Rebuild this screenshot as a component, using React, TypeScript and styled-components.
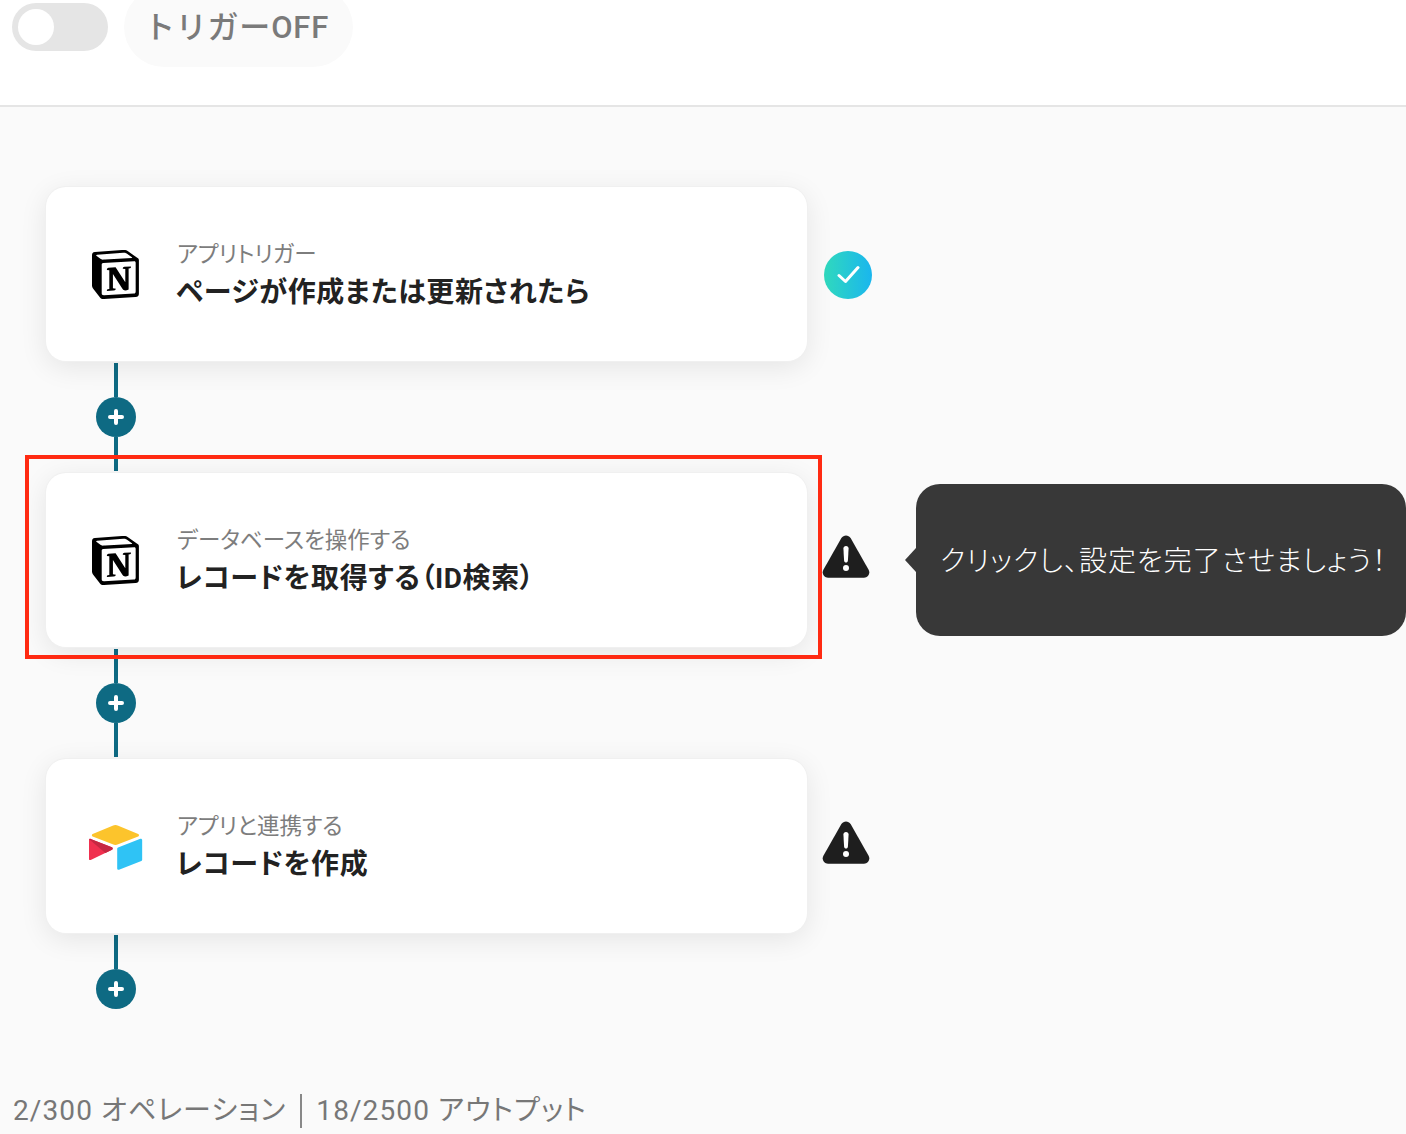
import styled, { createGlobalStyle } from "styled-components";

const GlobalStyle = createGlobalStyle`
  html, body {
    margin: 0;
    padding: 0;
    overflow: hidden;
    background: #fafafa;
  }

  * {
    box-sizing: border-box;
  }

  body {
    font-family: Roboto, "Noto Sans CJK JP", sans-serif;
  }
`;

const NotionLogo = () => (
  <svg width="49" height="50" viewBox="0 0 100 102">
    <path
      fill="#fff"
      d="M6.017 4.313l55.333 -4.087c6.797 -0.583 8.543 -0.19 12.817 2.917l17.663 12.443c2.913 2.14 3.883 2.723 3.883 5.053v68.243c0 4.277 -1.553 6.807 -6.99 7.193L24.467 99.967c-4.08 0.193 -6.023 -0.39 -8.16 -3.113L3.3 79.94c-2.333 -3.113 -3.3 -5.443 -3.3 -8.167V11.113c0 -3.497 1.553 -6.413 6.017 -6.8z"
    />
    <path
      fill="#000"
      fillRule="evenodd"
      d="M61.35 0.227l-55.333 4.087C1.553 4.7 0 7.617 0 11.113v60.66c0 2.723 0.967 5.053 3.3 8.167l13.007 16.913c2.137 2.723 4.08 3.307 8.16 3.113l64.257 -3.89c5.433 -0.387 6.99 -2.917 6.99 -7.193V20.64c0 -2.21 -0.873 -2.847 -3.443 -4.733L74.167 3.143c-4.273 -3.107 -6.02 -3.5 -12.817 -2.917zM25.92 19.523c-5.247 0.353 -6.437 0.433 -9.417 -1.99L8.927 11.507c-0.77 -0.78 -0.383 -1.753 1.557 -1.947l53.193 -3.887c4.467 -0.39 6.793 1.167 8.54 2.527l9.123 6.61c0.39 0.197 1.36 1.36 0.193 1.36l-54.933 3.307 -0.68 0.047zM19.803 88.3V30.367c0 -2.53 0.777 -3.697 3.103 -3.893L86 22.78c2.14 -0.193 3.107 1.167 3.107 3.693v57.547c0 2.53 -0.39 4.67 -3.883 4.863l-60.377 3.5c-3.493 0.193 -5.043 -0.97 -5.043 -3.983zm59.6 -54.827c0.387 1.75 0 3.5 -1.75 3.7l-2.91 0.577v42.773c-2.527 1.36 -4.853 2.137 -6.797 2.137 -3.107 0 -3.883 -0.973 -6.21 -3.887l-19.03 -29.94v28.967l6.02 1.363s0 3.5 -4.857 3.5l-13.39 0.777c-0.39 -0.78 0 -2.723 1.357 -3.11l3.497 -0.97v-38.3L30.48 40.667c-0.39 -1.75 0.58 -4.277 3.3 -4.473l14.367 -0.967 19.8 30.327v-26.83l-5.047 -0.58c-0.39 -2.143 1.163 -3.7 3.103 -3.89l13.4 -0.78z"
    />
  </svg>
);

const AirtableLogo = () => (
  <svg width="55" height="47" viewBox="12 8 182 153">
    <path
      fill="#fcc42c"
      d="M90.039 12.368 24.079 39.66c-3.667 1.519-3.63 6.729.062 8.192l66.235 26.266a24.58 24.58 0 0 0 18.12 0l66.236-26.266c3.69-1.463 3.729-6.673.06-8.191l-65.958-27.293a24.58 24.58 0 0 0-18.795 0"
    />
    <path
      fill="#2fc3f5"
      d="M105.312 88.46v65.617c0 3.12 3.147 5.258 6.048 4.108l73.806-28.648a4.42 4.42 0 0 0 2.79-4.108V59.813c0-3.121-3.147-5.258-6.048-4.108l-73.806 28.648a4.42 4.42 0 0 0-2.79 4.108"
    />
    <path
      fill="#f0304f"
      d="m88.078 91.846-21.904 10.576-2.224 1.075-46.238 22.155c-2.93 1.414-6.672-.722-6.672-3.978V60.088c0-1.178.604-2.195 1.414-2.96a5 5 0 0 1 1.12-.84c1.104-.663 2.68-.84 4.02-.31L87.71 83.76c3.564 1.414 3.844 6.408.368 8.087"
    />
    <path
      fill="#c62842"
      d="m88.078 91.846-21.904 10.576-53.72-45.295a5 5 0 0 1 1.12-.839c1.104-.663 2.68-.84 4.02-.31L87.71 83.76c3.564 1.414 3.844 6.408.368 8.087"
    />
  </svg>
);

const CheckIcon = () => (
  <svg width="24" height="24" viewBox="0 0 24 24" fill="none">
    <path
      d="M3 12.5 9.5 18.5 22 4.5"
      stroke="#fff"
      strokeWidth="3"
      strokeLinecap="round"
      strokeLinejoin="round"
    />
  </svg>
);

const WarningIcon = () => (
  <svg width="48" height="43" viewBox="0 0 48 43">
    <path
      fill="#1e1e1e"
      d="M19.4 3.1c2.1-3.6 7.1-3.6 9.2 0l18 31.6c2 3.6-.5 8-4.6 8H6c-4.1 0-6.6-4.4-4.6-8z"
    />
    <path
      fill="#fff"
      d="M21.4 13.5c0-1.5 1.1-2.6 2.6-2.6s2.6 1.1 2.6 2.6l-.7 12.3c-.1 1-.9 1.8-1.9 1.8s-1.8-.8-1.9-1.8z"
    />
    <circle cx="24" cy="33" r="3" fill="#fff" />
  </svg>
);

const PlusIcon = () => (
  <svg width="16" height="16" viewBox="0 0 16 16" fill="none">
    <path
      d="M8 2v12M2 8h12"
      stroke="#fff"
      strokeWidth="4"
      strokeLinecap="round"
    />
  </svg>
);

interface StepProps {
  logo: React.ReactNode;
  label: string;
  title: string;
  highlighted?: boolean;
  status: React.ReactNode;
  children?: React.ReactNode;
}

const Step = ({ logo, label, title, highlighted, status, children }: StepProps) => (
  <StepRow>
    <Card>
      <LogoSlot>{logo}</LogoSlot>
      <CardText>
        <CardLabel>{label}</CardLabel>
        <CardTitle>{title}</CardTitle>
      </CardText>
      {highlighted && <Highlight />}
    </Card>
    {status}
    {children}
  </StepRow>
);

const Connector = ({ last }: { last?: boolean }) => (
  <ConnectorColumn>
    <ConnectorLine />
    <AddButton>
      <PlusIcon />
    </AddButton>
    {!last && <ConnectorLine />}
  </ConnectorColumn>
);

const App = () => (
  <>
    <GlobalStyle />
    <Page>
      <Header>
        <Toggle>
          <ToggleKnob />
        </Toggle>
        <TriggerPill>トリガーOFF</TriggerPill>
      </Header>
      <Flow>
        <Step
          logo={<NotionLogo />}
          label="アプリトリガー"
          title="ページが作成または更新されたら"
          status={
            <DoneBadge>
              <CheckIcon />
            </DoneBadge>
          }
        />
        <Connector />
        <Step
          logo={<NotionLogo />}
          label="データベースを操作する"
          title="レコードを取得する（ID検索）"
          highlighted
          status={
            <WarningSlot>
              <WarningIcon />
            </WarningSlot>
          }
        >
          <Tooltip>クリックし、設定を完了させましょう！</Tooltip>
        </Step>
        <Connector />
        <Step
          logo={<AirtableLogo />}
          label="アプリと連携する"
          title="レコードを作成"
          status={
            <WarningSlot>
              <WarningIcon />
            </WarningSlot>
          }
        />
        <Connector last />
      </Flow>
      <Usage>
        2/300 オペレーション
        <UsageDivider />
        18/2500 アウトプット
      </Usage>
    </Page>
  </>
);

const Page = styled.div`
  display: flex;
  flex-direction: column;

  width: 1406px;
  height: 1134px;
  overflow: hidden;

  background: #fafafa;
`;

const Header = styled.header`
  display: flex;
  align-items: flex-start;
  gap: 16px;
  flex-shrink: 0;

  height: 107px;
  padding: 3px 0 0 12px;
  overflow: hidden;

  background: #fff;
  border-bottom: 2px solid #e5e5e5;
`;

const Toggle = styled.div`
  display: flex;
  align-items: center;

  width: 96px;
  height: 48px;
  padding-left: 6px;

  background: #e5e5e5;
  border-radius: 24px;
`;

const ToggleKnob = styled.span`
  width: 36px;
  height: 36px;

  background: #fff;
  border-radius: 50%;
`;

const TriggerPill = styled.div`
  display: flex;
  align-items: center;
  justify-content: center;

  width: 229px;
  height: 80px;
  margin-top: -16px;
  padding: 0 4px 5px 0;

  font-size: 31px;
  font-weight: 500;
  letter-spacing: 0.8px;
  color: #7a7a7a;
  background: #fafafa;
  border-radius: 40px;
`;

const Flow = styled.main`
  display: flex;
  flex-direction: column;

  padding: 80px 0 0 46px;
`;

const StepRow = styled.section`
  position: relative;

  display: flex;
  align-items: center;
  gap: 17px;
`;

const Card = styled.div`
  position: relative;

  display: flex;
  align-items: center;
  flex-shrink: 0;

  width: 761px;
  height: 174px;

  background: #fff;
  border-radius: 20px;
  box-shadow: 0 0 0 1px #f0f0f0, 0 6px 28px rgba(0, 0, 0, 0.09);
`;

const LogoSlot = styled.div`
  display: flex;
  align-items: center;
  justify-content: center;
  flex-shrink: 0;

  width: 131px;
  padding: 2px 0 0 10px;
`;

const CardText = styled.div`
  margin-top: 4px;
`;

const CardLabel = styled.p`
  margin: 0 0 4px;

  font-size: 22.5px;
  line-height: 30px;
  color: #7d7d7d;
  font-feature-settings: "palt";
`;

const CardTitle = styled.h3`
  margin: 0 0 0 -1px;

  font-size: 28px;
  font-weight: 700;
  line-height: 40px;
  letter-spacing: 0.6px;
  color: #222;
  font-feature-settings: "palt";
`;

const Highlight = styled.div`
  position: absolute;
  top: -18px;
  right: -15px;
  bottom: -12px;
  left: -21px;

  border: 4px solid #ff2a12;
  pointer-events: none;
`;

const DoneBadge = styled.div`
  display: flex;
  align-items: center;
  justify-content: center;

  width: 48px;
  height: 48px;
  margin-top: 2px;

  background: linear-gradient(90deg, #30d9bd, #1ab6ee);
  border-radius: 50%;
`;

const WarningSlot = styled.div`
  display: flex;

  margin: -7px 0 0 -2px;
`;

const Tooltip = styled.div`
  position: absolute;
  top: 11px;
  left: 870px;

  display: flex;
  align-items: center;

  width: 490px;
  height: 152px;
  padding: 0 0 3px 24px;

  font-size: 28px;
  font-weight: 300;
  letter-spacing: 1px;
  color: #fff;
  background: #383838;
  border-radius: 24px;
  font-feature-settings: "palt";
  white-space: nowrap;

  &::before {
    content: "";
    position: absolute;
    top: 64px;
    left: -11px;

    border-top: 12px solid transparent;
    border-bottom: 12px solid transparent;
    border-right: 11px solid #383838;
  }
`;

const ConnectorColumn = styled.div`
  display: flex;
  flex-direction: column;
  align-items: center;

  width: 40px;
  height: 112px;
  margin-left: 50px;
  padding: 2px 0;
`;

const ConnectorLine = styled.span`
  width: 4px;
  height: 34px;

  background: #0e6a83;
`;

const AddButton = styled.div`
  display: flex;
  align-items: center;
  justify-content: center;
  flex-shrink: 0;

  width: 40px;
  height: 40px;

  background: #0e6a83;
  border-radius: 50%;
`;

const Usage = styled.footer`
  display: flex;
  align-items: center;

  margin-top: 48px;
  padding-left: 13px;

  font-size: 28px;
  line-height: 36px;
  letter-spacing: 1.1px;
  color: #777;
  font-feature-settings: "palt";
`;

const UsageDivider = styled.span`
  width: 2px;
  height: 34px;
  margin: 0 14px;

  background: #888;
`;

export default App;
